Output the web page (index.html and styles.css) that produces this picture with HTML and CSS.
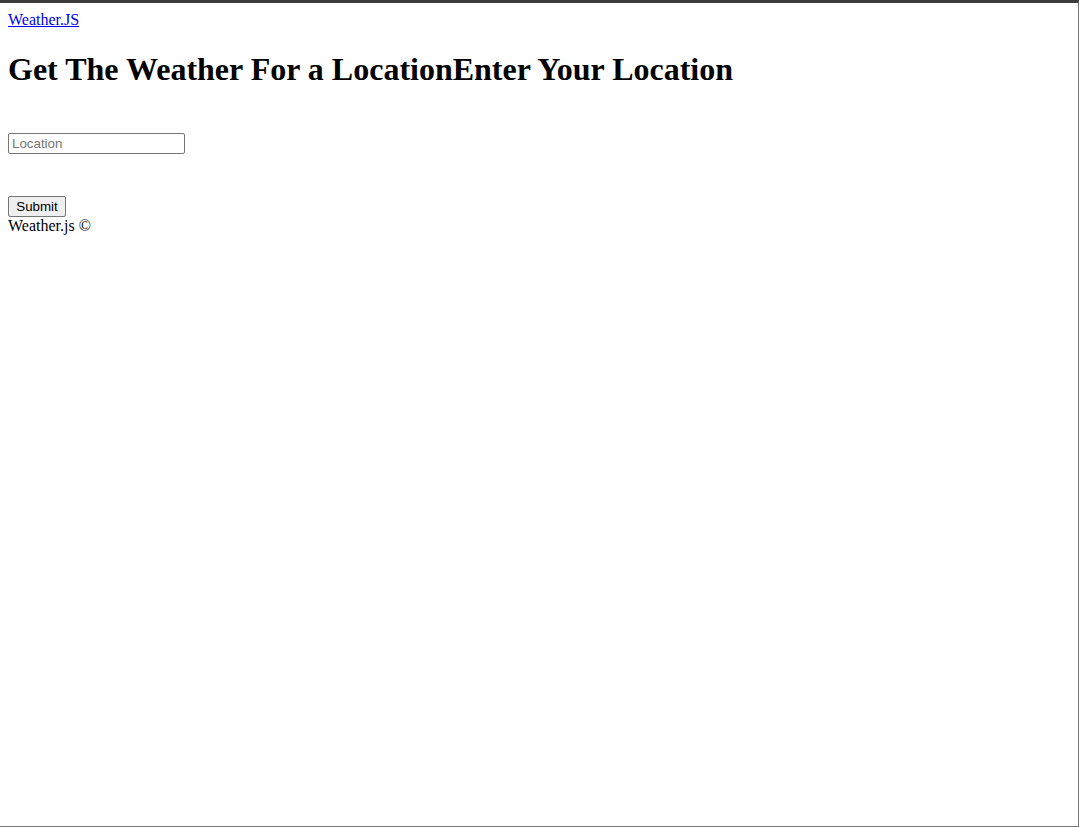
FILE: index.html
```html
<!DOCTYPE html>
<html lang="en">
<head>
<meta charset="utf-8">
<title>Weather.JS</title>
<link rel="stylesheet" href="styles.css">
</head>
<body>
<nav class="nav"><a class="brand" href="#">Weather.JS</a></nav>
<h1 class="title">Get The Weather For a Location<span>Enter Your Location</span></h1>
<form class="form">
  <div class="row"><input class="field" type="text" placeholder="Location"></div>
  <div class="row-btn"><button class="btn" type="button">Submit</button></div>
</form>
<footer class="footer">Weather.js ©</footer>
</body>
</html>
```
FILE: styles.css
```css
html {
  box-sizing: border-box;
  min-height: 100vh;
  height: 100%;
  border-top: 3px solid #3b3b3b;
  border-right: 1px solid #767676;
  border-bottom: 1px solid #767676;
  background: #fff;
}
body {
  margin: 8px;
  font-family: "Liberation Serif", "Times New Roman", serif;
  font-size: 16px;
  color: #000;
}
.nav {
  line-height: 18px;
}
.brand {
  color: #0000ee;
  text-decoration: underline;
}
.title {
  font-size: 32px;
  font-weight: bold;
  margin: 22px 0 20px;
  line-height: 37px;
}
.form {
  margin: 0;
  padding-top: 25px;
}
.row {
  height: 21px;
}
.field {
  box-sizing: border-box;
  width: 177px;
  height: 21px;
  margin: 0;
  padding: 1px 3px;
  border: 1px solid #767676;
  border-radius: 2px;
  font-family: "Liberation Sans", Arial, sans-serif;
  font-size: 13.33px;
  display: block;
}
.field::placeholder {
  color: #757575;
}
.row-btn {
  padding-top: 42px;
  height: 21px;
}
.btn {
  box-sizing: border-box;
  display: block;
  width: 58px;
  height: 21px;
  margin: 0;
  padding: 1px 6px;
  border: 1px solid #767676;
  border-radius: 2px;
  background: #efefef;
  font-family: "Liberation Sans", Arial, sans-serif;
  font-size: 13.33px;
  color: #000;
}
.footer {
  line-height: 18px;
}
```
